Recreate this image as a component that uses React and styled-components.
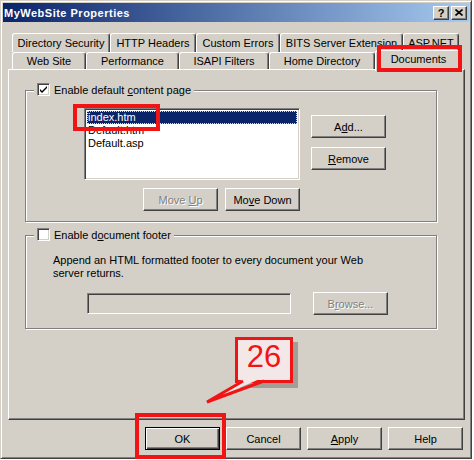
import React from "react";
import styled, { createGlobalStyle, css } from "styled-components";

const GlobalStyle = createGlobalStyle`
  html, body { margin: 0; padding: 0; background: #fff; }
  body { font-family: "Liberation Sans", Arial, sans-serif; font-size: 11px; }
`;

const Screen = styled.div`
  position: relative;
  width: 474px;
  height: 460px;
  overflow: hidden;
`;

const Dialog = styled.div`
  width: 472px;
  height: 459px;
  box-sizing: border-box;
  border: 1px solid;
  border-color: #d4d0c8 #404040 #404040 #d4d0c8;
  box-shadow: inset 1px 1px #fff, inset -1px -1px #808080;
  background: #d4d0c8;
  padding: 2px;
  display: flex;
  flex-direction: column;
  color: #000;
`;

const TitleBar = styled.div`
  height: 19px;
  flex: none;
  display: flex;
  align-items: center;
  justify-content: space-between;
  padding: 0 2px 0 1px;
  background: linear-gradient(to right, #0a246a, #a6caf0);
  color: #fff;
  font-weight: bold;
  letter-spacing: 0.5px;
`;

const CaptionButtons = styled.div`
  display: flex;
  gap: 2px;
`;

const CaptionButton = styled.div`
  width: 16px;
  height: 14px;
  box-sizing: border-box;
  background: #d4d0c8;
  border: 1px solid;
  border-color: #fff #404040 #404040 #fff;
  box-shadow: inset -1px -1px #808080;
  display: flex;
  align-items: center;
  justify-content: center;
  color: #000;
  font-weight: bold;
  font-size: 11px;
  letter-spacing: 0;
`;

const Body = styled.div`
  padding: 11px 0 0 5px;
  display: flex;
  flex-direction: column;
`;

const TabStrip = styled.div`
  margin-left: 4px;
  display: flex;
  flex-direction: column;
  position: relative;
  z-index: 1;
`;

const TabRow = styled.div`
  display: flex;
  height: ${(p) => p.$h}px;
`;

const Tab = styled.div`
  width: ${(p) => p.$w}px;
  flex: none;
  box-sizing: border-box;
  border: 1px solid;
  border-bottom: none;
  border-color: #fff #404040 transparent #fff;
  border-radius: 3px 3px 0 0;
  box-shadow: inset -1px 0 #808080;
  background: #d4d0c8;
  display: flex;
  align-items: center;
  justify-content: center;
  white-space: nowrap;
  ${(p) =>
    p.$active &&
    css`
      height: 21px;
      margin-top: -2px;
      padding-bottom: 4px;
      position: relative;
      z-index: 2;
    `}
`;

const Panel = styled.div`
  width: 457px;
  height: 351px;
  flex: none;
  box-sizing: border-box;
  border: 1px solid;
  border-color: #fff #404040 #404040 #fff;
  box-shadow: inset -1px -1px #808080;
  padding: 20px 0 0 16px;
  display: flex;
  flex-direction: column;
  gap: 13px;
`;

const Group = styled.div`
  width: 412px;
  height: ${(p) => p.$h}px;
  flex: none;
  box-sizing: border-box;
  border: 1px solid #808080;
  box-shadow: inset 1px 1px #fff, 1px 1px #fff;
`;

const Legend = styled.div`
  display: flex;
  align-items: center;
  gap: 4px;
  width: fit-content;
  height: 13px;
  margin: -8px 0 0 8px;
  padding: 0 3px;
  background: #d4d0c8;
`;

const CheckBox = styled.span`
  width: 13px;
  height: 13px;
  flex: none;
  box-sizing: border-box;
  border: 1px solid;
  border-color: #808080 #fff #fff #808080;
  box-shadow: inset 1px 1px #404040, inset -1px -1px #d4d0c8;
  background: #fff;
  display: flex;
  align-items: center;
  justify-content: center;
`;

const ListArea = styled.div`
  display: flex;
  margin: 12px 0 0 58px;
`;

const ListColumn = styled.div`
  width: 216px;
  display: flex;
  flex-direction: column;
`;

const Sunken = css`
  box-sizing: border-box;
  border: 1px solid;
  border-color: #808080 #fff #fff #808080;
  box-shadow: inset 1px 1px #404040, inset -1px -1px #d4d0c8;
`;

const ListBox = styled.div`
  ${Sunken};
  height: 72px;
  background: #fff;
  padding: 2px;
  display: flex;
  flex-direction: column;
`;

const ListItem = styled.div`
  height: 13px;
  line-height: 13px;
  padding-left: 1px;
  white-space: nowrap;
  ${(p) =>
    p.$selected &&
    css`
      background: #0a246a;
      color: #fff;
      outline: 1px dotted #e8e4a0;
      outline-offset: -1px;
    `}
`;

const ButtonRow = styled.div`
  display: flex;
  justify-content: flex-end;
  gap: ${(p) => p.$gap}px;
  margin-top: ${(p) => p.$top}px;
`;

const SideButtons = styled.div`
  display: flex;
  flex-direction: column;
  gap: 9px;
  margin: 7px 0 0 11px;
`;

const Button = styled.button`
  width: 75px;
  height: 23px;
  flex: none;
  box-sizing: border-box;
  padding: 0;
  font: inherit;
  color: #000;
  background: #d4d0c8;
  border: 1px solid;
  border-color: #fff #404040 #404040 #fff;
  box-shadow: inset -1px -1px #808080;
  ${(p) =>
    p.disabled &&
    css`
      color: #808080;
      text-shadow: 1px 1px #fff;
    `}
  ${(p) =>
    p.$default &&
    css`
      border-color: #000;
      box-shadow: inset 1px 1px #fff, inset -1px -1px #404040,
        inset -2px -2px #808080;
    `}
`;

const FooterText = styled.div`
  margin: 13px 0 0 27px;
  line-height: 13px;
`;

const FieldRow = styled.div`
  display: flex;
  align-items: center;
  gap: 22px;
  margin: 12px 0 0 61px;
`;

const Field = styled.div`
  ${Sunken};
  width: 204px;
  height: 21px;
  background: #d4d0c8;
`;

const DialogButtons = styled.div`
  width: 455px;
  display: flex;
  justify-content: flex-end;
  gap: 6px;
  margin-top: 7px;
`;

const RedBox = styled.div`
  position: absolute;
  box-sizing: border-box;
  border: 4px solid #f01414;
  left: ${(p) => p.$x}px;
  top: ${(p) => p.$y}px;
  width: ${(p) => p.$w}px;
  height: ${(p) => p.$h}px;
  z-index: 5;
`;

const Callout = styled.div`
  position: absolute;
  left: 235px;
  top: 337px;
  width: 58px;
  height: 46px;
  box-sizing: border-box;
  border: 3px solid #f01414;
  background: #f3e7e7;
  box-shadow: 5px 5px 0 rgba(120, 116, 110, 0.55);
  color: #f01414;
  font-size: 31px;
  line-height: 31px;
  padding-top: 1px;
  text-align: center;
  z-index: 5;
`;

const CalloutTail = styled.svg`
  position: absolute;
  left: 200px;
  top: 376px;
  z-index: 6;
`;

const Check = () => (
  <svg width="9" height="9" viewBox="0 0 9 9">
    <path d="M1 4 L3 6 L8 1 L8 3 L3 8 L1 6 Z" fill="#000" />
  </svg>
);

const CloseGlyph = () => (
  <svg width="8" height="7" viewBox="0 0 8 7">
    <path d="M0.5 0.5 L7.5 6.5 M7.5 0.5 L0.5 6.5" stroke="#000" strokeWidth="1.6" />
  </svg>
);

const backTabs = [
  ["Directory Security", 98],
  ["HTTP Headers", 86],
  ["Custom Errors", 84],
  ["BITS Server Extension", 123],
  ["ASP.NET", 56],
];

const frontTabs = [
  ["Web Site", 74],
  ["Performance", 93],
  ["ISAPI Filters", 90],
  ["Home Directory", 106],
  ["Documents", 87],
];

const App = () => {
  return (
    <>
      <GlobalStyle />
      <Screen>
        <Dialog>
          <TitleBar>
            <span>MyWebSite Properties</span>
            <CaptionButtons>
              <CaptionButton>?</CaptionButton>
              <CaptionButton>
                <CloseGlyph />
              </CaptionButton>
            </CaptionButtons>
          </TitleBar>

          <Body>
            <TabStrip>
              <TabRow $h={19}>
                {backTabs.map(([label, w]) => (
                  <Tab key={label} $w={w}>
                    {label}
                  </Tab>
                ))}
              </TabRow>
              <TabRow $h={17}>
                {frontTabs.map(([label, w]) => (
                  <Tab key={label} $w={w} $active={label === "Documents"}>
                    {label}
                  </Tab>
                ))}
              </TabRow>
            </TabStrip>

            <Panel>
              <Group $h={132}>
                <Legend>
                  <CheckBox>
                    <Check />
                  </CheckBox>
                  <span>
                    Enable default <u>c</u>ontent page
                  </span>
                </Legend>
                <ListArea>
                  <ListColumn>
                    <ListBox>
                      <ListItem $selected>index.htm</ListItem>
                      <ListItem>Default.htm</ListItem>
                      <ListItem>Default.asp</ListItem>
                    </ListBox>
                    <ButtonRow $gap={7} $top={8}>
                      <Button disabled>
                        Move <u>U</u>p
                      </Button>
                      <Button>
                        Mo<u>v</u>e Down
                      </Button>
                    </ButtonRow>
                  </ListColumn>
                  <SideButtons>
                    <Button>
                      A<u>d</u>d...
                    </Button>
                    <Button>
                      <u>R</u>emove
                    </Button>
                  </SideButtons>
                </ListArea>
              </Group>

              <Group $h={94}>
                <Legend>
                  <CheckBox />
                  <span>
                    Enable d<u>o</u>cument footer
                  </span>
                </Legend>
                <FooterText>
                  Append an HTML formatted footer to every document your Web
                  <br />
                  server returns.
                </FooterText>
                <FieldRow>
                  <Field />
                  <Button disabled>
                    B<u>r</u>owse...
                  </Button>
                </FieldRow>
              </Group>
            </Panel>

            <DialogButtons>
              <Button $default>OK</Button>
              <Button>Cancel</Button>
              <Button>
                <u>A</u>pply
              </Button>
              <Button>Help</Button>
            </DialogButtons>
          </Body>
        </Dialog>

        <RedBox $x={377} $y={45} $w={85} $h={27} />
        <RedBox $x={73} $y={104} $w={87} $h={27} />
        <RedBox $x={135} $y={413} $w={91} $h={46} />

        <Callout>26</Callout>
        <CalloutTail width="70" height="30" viewBox="0 0 70 30">
          <polygon points="45,2 9,25 62,2" fill="#f3e7e7" />
          <polyline
            points="43,5 7,26 64,5"
            fill="none"
            stroke="#f01414"
            strokeWidth="3"
          />
        </CalloutTail>
      </Screen>
    </>
  );
};

export default App;
